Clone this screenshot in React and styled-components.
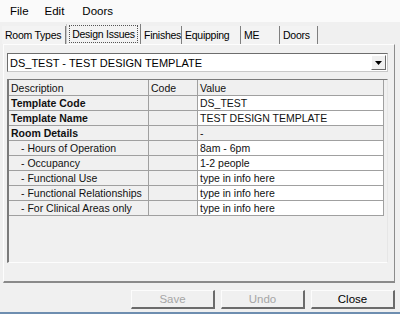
import React from "react";
import styled, { createGlobalStyle } from "styled-components";

const GlobalStyle = createGlobalStyle`
  body {
    margin: 0;
    background-color: #f0f0f0;
    font-family: "Liberation Sans", Arial, sans-serif;
    font-size: 11px;
    color: #000;
  }
`;

const Window = styled.div`
  width: 400px;
  height: 314px;
  display: flex;
  flex-direction: column;
  background-color: #f0f0f0;
  overflow: hidden;
`;

const MenuBar = styled.div`
  height: 22px;
  display: flex;
  align-items: center;
  background-color: #fafafa;
  font-size: 11.5px;
`;

const MenuItem = styled.div`
  padding: 0 ${(p) => p.pad || 8}px;
  &:first-child {
    padding-left: 10px;
  }
`;

const TabStrip = styled.div`
  height: 22px;
  display: flex;
  align-items: flex-end;
  padding-left: 2px;
`;

const Tab = styled.div`
  width: ${(p) => p.width}px;
  height: ${(p) => (p.active ? 20 : 18)}px;
  box-sizing: border-box;
  display: flex;
  align-items: center;
  justify-content: ${(p) => (p.active ? "center" : "flex-start")};
  padding-left: ${(p) => (p.active ? 0 : 2)}px;
  background-color: #f3f3f3;
  border-right: 1px solid #7f7f7f;
  border-left: 1px solid ${(p) => (p.active ? "#c8c8c8" : "transparent")};
  font-size: 10.5px;
  letter-spacing: -0.25px;
  white-space: nowrap;
`;

const Focus = styled.span`
  border: 1px dotted #555;
  padding: 2px 2px;
`;

const Panel = styled.div`
  height: 239px;
  box-sizing: border-box;
  margin: 0 5px 0 3px;
  border-top: 1px solid #fdfdfd;
  border-left: 1px solid #fdfdfd;
  border-right: 1px solid #8c8c8c;
  border-bottom: 2px solid #8a8a8a;
  padding: 8px 6px 0 3px;
  display: flex;
  flex-direction: column;
  gap: 7px;
`;

const Combo = styled.div`
  height: 19px;
  box-sizing: border-box;
  display: flex;
  align-items: center;
  background-color: #fff;
  border: 1px solid #6d6d6d;
  border-right-color: #c9c9c9;
  border-bottom-color: #c9c9c9;
  padding-left: 2px;
  font-size: 11px;
`;

const ComboText = styled.div`
  flex: 1;
`;

const ComboButton = styled.div`
  width: 15px;
  height: 15px;
  box-sizing: border-box;
  display: flex;
  align-items: center;
  justify-content: center;
  margin-right: 1px;
  background-color: #f0f0f0;
  border-top: 1px solid #fff;
  border-left: 1px solid #fff;
  border-right: 1px solid #6a6a6a;
  border-bottom: 1px solid #6a6a6a;
`;

const GridBox = styled.div`
  height: 184px;
  box-sizing: border-box;
  border-top: 1px solid #7a7a7a;
  border-left: 2px solid #7a7a7a;
  border-right: 1px solid #e6e6e6;
  border-bottom: 1px solid #fdfdfd;
  background-color: #f0f0f0;
`;

const Grid = styled.div`
  display: grid;
  grid-template-columns: 140px 49px 1fr;
  margin-right: 3px;
`;

const Cell = styled.div`
  height: ${(p) => (p.head ? 16 : 15)}px;
  box-sizing: border-box;
  display: flex;
  align-items: center;
  padding-left: ${(p) => (p.indent ? 12 : 2)}px;
  background-color: ${(p) => (p.white ? "#fff" : "#f0f0f0")};
  border-right: 1px solid #a0a0a0;
  border-bottom: 1px solid #a0a0a0;
  font-weight: ${(p) => (p.bold ? 700 : 400)};
  font-size: 10.5px;
  color: #111;
  white-space: nowrap;
  overflow: hidden;
`;

const Footer = styled.div`
  flex: 1;
  display: flex;
  justify-content: flex-end;
  align-items: flex-start;
  gap: 6px;
  padding: 7px 5px 0 0;
  border-bottom: 2px solid #6e8eb0;
`;

const Button = styled.div`
  width: 84px;
  height: 19px;
  box-sizing: border-box;
  display: flex;
  align-items: center;
  justify-content: center;
  background-color: #f0f0f0;
  border-top: 1px solid #fcfcfc;
  border-left: 1px solid #fcfcfc;
  border-right: 2px solid #6b6b6b;
  border-bottom: 2px solid #6b6b6b;
  font-size: 11.5px;
  color: ${(p) => (p.disabled ? "#a6a6a6" : "#000")};
`;

const tabs = [
  { label: "Room Types", width: 64 },
  { label: "Design Issues", width: 75, active: true },
  { label: "Finishes", width: 41 },
  { label: "Equipping", width: 59 },
  { label: "ME", width: 39 },
  { label: "Doors", width: 38 },
];

const rows = [
  { desc: "Template Code", value: "DS_TEST", bold: true },
  { desc: "Template Name", value: "TEST DESIGN TEMPLATE", bold: true },
  { desc: "Room Details", value: "-", bold: true, locked: true },
  { desc: "- Hours of Operation", value: "8am - 6pm", indent: true },
  { desc: "- Occupancy", value: "1-2 people", indent: true },
  { desc: "- Functional Use", value: "type in info here", indent: true },
  { desc: "- Functional Relationships", value: "type in info here", indent: true },
  { desc: "- For Clinical Areas only", value: "type in info here", indent: true },
];

export default function App() {
  return (
    <Window>
      <GlobalStyle />
      <MenuBar>
        <MenuItem>File</MenuItem>
        <MenuItem pad={8}>Edit</MenuItem>
        <MenuItem pad={10}>Doors</MenuItem>
      </MenuBar>
      <TabStrip>
        {tabs.map((t) => (
          <Tab key={t.label} width={t.width} active={t.active}>
            {t.active ? <Focus>{t.label}</Focus> : t.label}
          </Tab>
        ))}
      </TabStrip>
      <Panel>
        <Combo>
          <ComboText>DS_TEST - TEST DESIGN TEMPLATE</ComboText>
          <ComboButton>
            <svg width="7" height="4" viewBox="0 0 7 4">
              <path d="M0 0h7L3.5 4z" fill="#000" />
            </svg>
          </ComboButton>
        </Combo>
        <GridBox>
          <Grid>
            <Cell head>Description</Cell>
            <Cell head>Code</Cell>
            <Cell head>Value</Cell>
            {rows.map((r) => (
              <React.Fragment key={r.desc}>
                <Cell bold={r.bold} indent={r.indent}>{r.desc}</Cell>
                <Cell />
                <Cell white={!r.locked}>{r.value}</Cell>
              </React.Fragment>
            ))}
          </Grid>
        </GridBox>
      </Panel>
      <Footer>
        <Button disabled>Save</Button>
        <Button disabled>Undo</Button>
        <Button>Close</Button>
      </Footer>
    </Window>
  );
}
